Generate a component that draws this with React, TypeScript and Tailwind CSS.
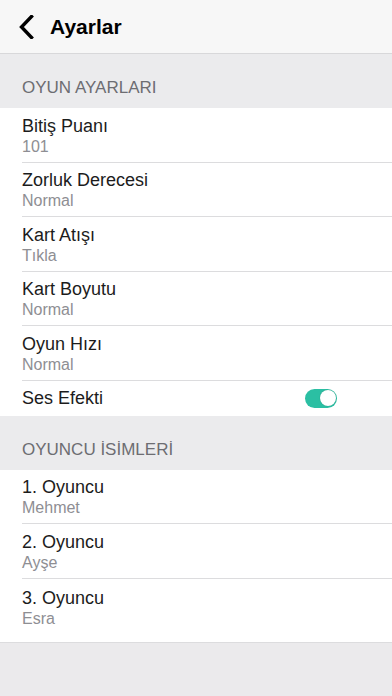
import React from "react";

const font = { fontFamily: '"Liberation Sans", Arial, sans-serif' };

function Row({ title, sub, last }: { title: string; sub?: string; last?: boolean }) {
  return (
    <div className="pl-[22px] bg-white">
      <div className={`h-[54.5px] flex flex-col justify-center pt-[3px] ${last ? "" : "border-b border-[#dcdcde]"}`}>
        <div className="text-[18px] leading-[20px] text-[#1c1c1c]">{title}</div>
        <div className="text-[16px] leading-[21px] text-[#8e8e93]">{sub}</div>
      </div>
    </div>
  );
}

function SectionHeader({ text }: { text: string }) {
  return (
    <div className="h-[54px] flex items-end pl-[22px] pb-[10px] bg-[#ebebed] text-[17px] leading-[20px] text-[#6d6d72]">
      {text}
    </div>
  );
}

export default function App() {
  return (
    <div className="w-[392px] h-[696px] bg-[#ebeaec] overflow-hidden" style={font}>
      <div className="h-[54px] bg-[#f7f7f7] border-b border-[#d8d8da] flex items-center">
        <svg width="16" height="24" viewBox="0 0 16 24" className="ml-[18px]">
          <path d="M13.5 1.5 L3.5 12 L13.5 22.5" fill="none" stroke="#000" strokeWidth="3.4" strokeLinecap="square" strokeLinejoin="miter" />
        </svg>
        <div className="ml-[16px] text-[21px] font-bold text-black">Ayarlar</div>
      </div>
      <SectionHeader text="OYUN AYARLARI" />
      <div className="bg-white">
        <Row title="Bitiş Puanı" sub="101" />
        <Row title="Zorluk Derecesi" sub="Normal" />
        <Row title="Kart Atışı" sub="Tıkla" />
        <Row title="Kart Boyutu" sub="Normal" />
        <Row title="Oyun Hızı" sub="Normal" />
        <div className="pl-[22px] pr-[55px] h-[35px] flex items-center justify-between bg-white">
          <div className="text-[18px] leading-[20px] text-[#1c1c1c]">Ses Efekti</div>
          <div className="w-[32px] h-[19px] rounded-full bg-[#2bbfa3] relative">
            <div className="absolute right-[1.5px] top-[1.5px] w-[16px] h-[16px] rounded-full bg-white shadow-[0_0_1px_rgba(0,0,0,0.3)]" />
          </div>
        </div>
      </div>
      <SectionHeader text="OYUNCU İSİMLERİ" />
      <div className="bg-white border-b border-[#dcdcde]">
        <Row title="1. Oyuncu" sub="Mehmet" />
        <Row title="2. Oyuncu" sub="Ayşe" />
        <div className="pl-[22px] bg-white">
          <div className="h-[63px] flex flex-col pt-[9px]">
            <div className="text-[18px] leading-[20px] text-[#1c1c1c]">3. Oyuncu</div>
            <div className="text-[16px] leading-[21px] text-[#8e8e93]">Esra</div>
          </div>
        </div>
      </div>
    </div>
  );
}
